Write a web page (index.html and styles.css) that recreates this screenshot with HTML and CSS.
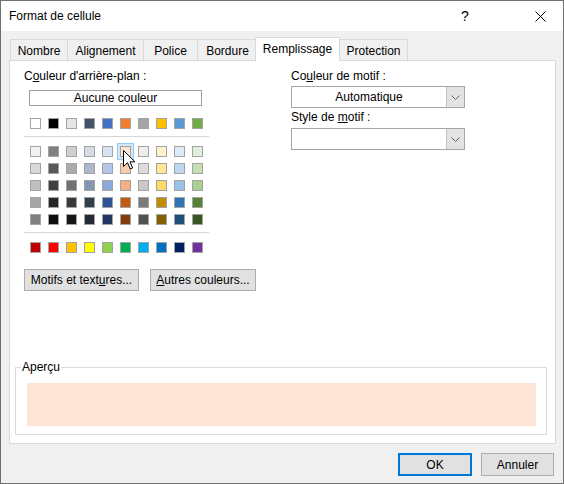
FILE: index.html
```html
<!DOCTYPE html>
<html lang="fr">
<head>
<meta charset="utf-8">
<title>Format de cellule</title>
<link rel="stylesheet" href="styles.css">
</head>
<body>
<div class="window">
  <div class="titlebar">
    <span class="title">Format de cellule</span>
    <span class="help">?</span>
    <span class="close"><svg width="11" height="11" viewBox="0 0 11 11"><path d="M0.5 0.5 L10.5 10.5 M10.5 0.5 L0.5 10.5" stroke="#000" stroke-width="1" fill="none"/></svg></span>
  </div>
  <div class="tabs">
    <div class="tab tab-nombre">Nombre</div>
    <div class="tab tab-align">Alignement</div>
    <div class="tab tab-police">Police</div>
    <div class="tab tab-bordure">Bordure</div>
    <div class="tab tab-rempl active">Remplissage</div>
    <div class="tab tab-protect">Protection</div>
  </div>
  <div class="panel">
    <div class="cols">
      <div class="left">
        <div class="label">C<u>o</u>uleur d'arrière-plan :</div>
        <div class="nocolor">Aucune couleur</div>
        <div class="row">
          <span class="sw" style="background:#ffffff"></span>
          <span class="sw" style="background:#000000"></span>
          <span class="sw" style="background:#e7e6e6"></span>
          <span class="sw" style="background:#44546a"></span>
          <span class="sw" style="background:#4472c4"></span>
          <span class="sw" style="background:#ed7d31"></span>
          <span class="sw" style="background:#a5a5a5"></span>
          <span class="sw" style="background:#ffc000"></span>
          <span class="sw" style="background:#5b9bd5"></span>
          <span class="sw" style="background:#70ad47"></span>
        </div>
        <div class="sep"></div>
        <div class="grid">
          <span class="sw" style="background:#f2f2f2"></span>
          <span class="sw" style="background:#808080"></span>
          <span class="sw" style="background:#d0cece"></span>
          <span class="sw" style="background:#d6dce4"></span>
          <span class="sw" style="background:#d9e1f2"></span>
          <span class="sw selected" style="background:#fce4d6"></span>
          <span class="sw" style="background:#ededed"></span>
          <span class="sw" style="background:#fff2cc"></span>
          <span class="sw" style="background:#ddebf7"></span>
          <span class="sw" style="background:#e2efda"></span>

          <span class="sw" style="background:#d9d9d9"></span>
          <span class="sw" style="background:#595959"></span>
          <span class="sw" style="background:#aeaaaa"></span>
          <span class="sw" style="background:#acb9ca"></span>
          <span class="sw" style="background:#b4c6e7"></span>
          <span class="sw" style="background:#f8cbad"></span>
          <span class="sw" style="background:#dbdbdb"></span>
          <span class="sw" style="background:#ffe699"></span>
          <span class="sw" style="background:#bdd7ee"></span>
          <span class="sw" style="background:#c6e0b4"></span>

          <span class="sw" style="background:#bfbfbf"></span>
          <span class="sw" style="background:#404040"></span>
          <span class="sw" style="background:#757171"></span>
          <span class="sw" style="background:#8497b0"></span>
          <span class="sw" style="background:#8ea9db"></span>
          <span class="sw" style="background:#f4b084"></span>
          <span class="sw" style="background:#c9c9c9"></span>
          <span class="sw" style="background:#ffd966"></span>
          <span class="sw" style="background:#9bc2e6"></span>
          <span class="sw" style="background:#a9d08e"></span>

          <span class="sw" style="background:#a6a6a6"></span>
          <span class="sw" style="background:#262626"></span>
          <span class="sw" style="background:#3a3838"></span>
          <span class="sw" style="background:#333f4f"></span>
          <span class="sw" style="background:#305496"></span>
          <span class="sw" style="background:#c65911"></span>
          <span class="sw" style="background:#7b7b7b"></span>
          <span class="sw" style="background:#bf8f00"></span>
          <span class="sw" style="background:#2f75b5"></span>
          <span class="sw" style="background:#548235"></span>

          <span class="sw" style="background:#808080"></span>
          <span class="sw" style="background:#0d0d0d"></span>
          <span class="sw" style="background:#161616"></span>
          <span class="sw" style="background:#222b35"></span>
          <span class="sw" style="background:#203764"></span>
          <span class="sw" style="background:#833c0c"></span>
          <span class="sw" style="background:#525252"></span>
          <span class="sw" style="background:#806000"></span>
          <span class="sw" style="background:#1f4e78"></span>
          <span class="sw" style="background:#375623"></span>

          <svg class="cursor" width="13" height="20" viewBox="0 0 13 20"><path d="M0.5 0.5 L0.5 16.5 L4.5 12.7 L7.3 19 L9.6 18 L7 11.8 L12 11.8 Z" fill="#fff" stroke="#000" stroke-width="1" stroke-linejoin="miter"/></svg>
        </div>
        <div class="sep"></div>
        <div class="row">
          <span class="sw" style="background:#c00000"></span>
          <span class="sw" style="background:#ff0000"></span>
          <span class="sw" style="background:#ffc000"></span>
          <span class="sw" style="background:#ffff00"></span>
          <span class="sw" style="background:#92d050"></span>
          <span class="sw" style="background:#00b050"></span>
          <span class="sw" style="background:#00b0f0"></span>
          <span class="sw" style="background:#0070c0"></span>
          <span class="sw" style="background:#002060"></span>
          <span class="sw" style="background:#7030a0"></span>
        </div>
        <div class="btns">
          <button class="btn btn-motifs">Motifs et text<u>u</u>res...</button>
          <button class="btn btn-autres"><u>A</u>utres couleurs...</button>
        </div>
      </div>
      <div class="right">
        <div class="label">Co<u>u</u>leur de motif :</div>
        <div class="select first">
          <span class="value">Automatique</span>
          <span class="arrow"><svg width="9" height="5" viewBox="0 0 9 5"><path d="M0.5 0.5 L4.5 4.5 L8.5 0.5" stroke="#606060" fill="none"/></svg></span>
        </div>
        <div class="label label2">Style de <u>m</u>otif :</div>
        <div class="select second">
          <span class="value"></span>
          <span class="arrow"><svg width="9" height="5" viewBox="0 0 9 5"><path d="M0.5 0.5 L4.5 4.5 L8.5 0.5" stroke="#606060" fill="none"/></svg></span>
        </div>
      </div>
    </div>
    <fieldset class="preview">
      <legend>Aperçu</legend>
      <div class="fill"></div>
    </fieldset>
  </div>
  <div class="footer">
    <button class="btn ok">OK</button>
    <button class="btn cancel">Annuler</button>
  </div>
</div>
</body>
</html>
```
FILE: styles.css
```css
* { box-sizing: border-box; }
html, body { margin: 0; padding: 0; }
body {
  width: 564px;
  height: 484px;
  font-family: "Liberation Sans", Arial, sans-serif;
  font-size: 12px;
  color: #000;
  background: #f0f0f0;
}
u { text-decoration: underline; text-underline-offset: 1px; }

.window {
  width: 564px;
  height: 484px;
  border: 1px solid #707070;
  background: #f0f0f0;
  display: flex;
  flex-direction: column;
}

.titlebar {
  height: 30px;
  flex: none;
  background: #fff;
  display: flex;
  align-items: center;
  padding-left: 8px;
}
.title { flex: 1; line-height: 15px; }
.help {
  width: 46px;
  text-align: center;
  font-size: 14px;
  line-height: 15px;
  margin-right: 29px;
}
.close {
  width: 46px;
  height: 30px;
  display: flex;
  align-items: center;
  justify-content: center;
}

.tabs {
  height: 29px;
  flex: none;
  display: flex;
  align-items: flex-end;
  padding-left: 9px;
}
.tab {
  height: 21px;
  padding: 1px 0 0 0;
  text-align: center;
  line-height: 20px;
  border: 1px solid #d9d9d9;
  border-bottom: none;
  margin-right: -1px;
  background: #f0f0f0;
  white-space: nowrap;
}
.tab-nombre { width: 58px; }
.tab-align { width: 77px; }
.tab-police { width: 55px; }
.tab-bordure { width: 61px; }
.tab-rempl { width: 85px; }
.tab-protect { width: 69px; }
.tab.active {
  height: 24px;
  margin: 0 -1px -1px -2px;
  padding-top: 1px;
  line-height: 20px;
  background: #fff;
  position: relative;
  z-index: 1;
}

.panel {
  height: 384px;
  flex: none;
  margin: 0 7px 0 8px;
  background: #fff;
  border: 1px solid #d9d9d9;
  padding: 8px 8px 8px 5px;
  display: flex;
  flex-direction: column;
}
.cols { display: flex; padding-left: 9px; }
.left { width: 267px; flex: none; }
.right { width: 174px; flex: none; }

.label { line-height: 15px; white-space: nowrap; }

.nocolor {
  margin: 6px 0 0 5px;
  width: 173px;
  height: 16px;
  border: 1px solid #a0a0a0;
  background: #fff;
  text-align: center;
  line-height: 14px;
}

.row, .grid {
  display: grid;
  grid-template-columns: repeat(10, 11px);
  column-gap: 7px;
  row-gap: 6px;
  margin-left: 6px;
}
.row { margin-top: 12px; }
.row + .btns { margin-top: 16px; }
.sep + .row { margin-top: 9px; }
.grid { margin-top: 9px; position: relative; }
.sw {
  display: block;
  width: 11px;
  height: 11px;
  border: 1px solid #a3a3a3;
}
.sw.selected {
  box-shadow: 0 0 0 2px #d4e7f7;
  outline: 1px solid #99c8ee;
  outline-offset: 2px;
}
.cursor {
  position: absolute;
  left: 93px;
  top: 4px;
}

.sep {
  height: 1px;
  width: 185px;
  background: #d5d5d5;
  margin-top: 7px;
}

.btns { display: flex; gap: 11px; }
.btn {
  font-family: inherit;
  font-size: 12px;
  color: #000;
  height: 22px;
  padding: 0;
  border: 1px solid #adadad;
  background: #e1e1e1;
  border-radius: 0;
  line-height: 20px;
}
.btn-motifs { width: 115px; }
.btn-autres { width: 106px; }

.select {
  height: 22px;
  border: 1px solid #a6a6a6;
  background: #fff;
  display: flex;
  margin-top: 2px;
}
.select.second { margin-top: 3px; }
.label2 { margin-top: 2px; }
.select .value { flex: 1; text-align: center; line-height: 20px; }
.select .arrow {
  width: 18px;
  flex: none;
  background: #e3e3e3;
  border-left: 1px solid #c2c2c2;
  display: flex;
  align-items: center;
  justify-content: center;
}

.preview {
  margin: auto 0 0 0;
  border: 1px solid #dcdcdc;
  padding: 8px 10px 8px 11px;
  min-width: 0;
}
.preview legend {
  padding: 0 1px;
  margin-left: -6px;
  line-height: 15px;
}
.fill { height: 43px; background: #fce4d6; }

.footer {
  display: flex;
  justify-content: flex-end;
  gap: 9px;
  padding: 9px 9px 0 0;
}
.ok {
  width: 74px;
  height: 23px;
  border: 1px solid #0078d7;
  box-shadow: inset 0 0 0 1px #0078d7;
}
.cancel { width: 73px; height: 23px; }
```
